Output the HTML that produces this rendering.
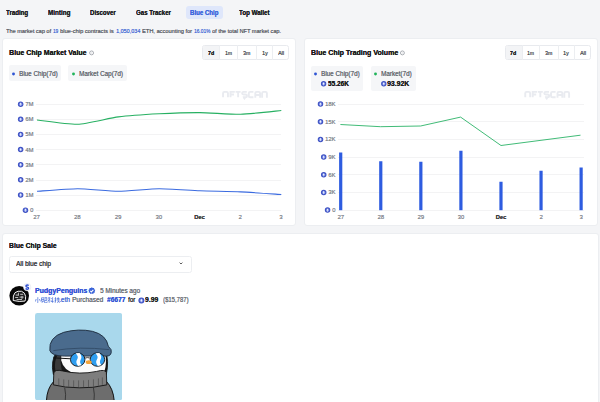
<!DOCTYPE html><html><head><meta charset="utf-8"><style>
html,body{margin:0;padding:0;}
body{width:600px;height:402px;overflow:hidden;background:#f4f5f7;position:relative;font-family:"Liberation Sans",sans-serif;}
.t{position:absolute;white-space:nowrap;line-height:1;}
.r{text-shadow:0.2px 0 0 currentColor;}
.b{text-shadow:0.12px 0 0 currentColor;}
.a{position:absolute;display:block;}
.card{position:absolute;background:#fff;border:1px solid #eceef1;border-radius:3px;box-sizing:border-box;}
.grp{position:absolute;border:1px solid #e8eaee;border-radius:2.5px;box-sizing:border-box;background:#fff;}
.leg{position:absolute;background:#f5f6f8;border-radius:2px;}
.dot{position:absolute;width:2.6px;height:2.6px;border-radius:50%;}
</style></head><body>
<div class="t b" style="left:6.20px;top:10px;font-size:6.8px;color:#1c1d1f;font-weight:700;transform:scaleX(0.9000);transform-origin:0 0;">Trading</div>
<div class="t b" style="left:48.20px;top:10px;font-size:6.8px;color:#1c1d1f;font-weight:700;transform:scaleX(0.9269);transform-origin:0 0;">Minting</div>
<div class="t b" style="left:89.90px;top:10px;font-size:6.8px;color:#1c1d1f;font-weight:700;transform:scaleX(0.8947);transform-origin:0 0;">Discover</div>
<div class="t b" style="left:135.70px;top:10px;font-size:6.8px;color:#1c1d1f;font-weight:700;transform:scaleX(0.8963);transform-origin:0 0;">Gas Tracker</div>
<div class="t b" style="left:238.50px;top:10px;font-size:6.8px;color:#1c1d1f;font-weight:700;transform:scaleX(0.9073);transform-origin:0 0;">Top Wallet</div>
<div class="a" style="left:186.3px;top:6.1px;width:36.6px;height:12.9px;border-radius:3px;background:#dfe7fb"></div>
<div class="t b" style="left:190.40px;top:10px;font-size:6.8px;color:#3f68dc;font-weight:700;transform:scaleX(0.8950);transform-origin:0 0;">Blue Chip</div>
<div class="t r" style="left:6.30px;top:28px;font-size:6.2px;color:#5d6168;font-weight:400;transform:scaleX(0.9027);transform-origin:0 0;">The market cap of</div>
<div class="t r" style="left:53.30px;top:28px;font-size:6.2px;color:#4a6fd6;font-weight:400;transform:scaleX(0.7396);transform-origin:0 0;">19</div>
<div class="t r" style="left:59.70px;top:28px;font-size:6.2px;color:#5d6168;font-weight:400;transform:scaleX(0.9221);transform-origin:0 0;">blue-chip contracts is</div>
<div class="t r" style="left:115.80px;top:28px;font-size:6.2px;color:#4a6fd6;font-weight:400;transform:scaleX(0.8811);transform-origin:0 0;">1,050,034</div>
<div class="t r" style="left:141.70px;top:28px;font-size:6.2px;color:#5d6168;font-weight:400;transform:scaleX(0.9144);transform-origin:0 0;">ETH, accounting for</div>
<div class="t r" style="left:193.70px;top:28px;font-size:6.2px;color:#4a6fd6;font-weight:400;transform:scaleX(0.7800);transform-origin:0 0;">16.01%</div>
<div class="t r" style="left:211.70px;top:28px;font-size:6.2px;color:#5d6168;font-weight:400;transform:scaleX(0.9007);transform-origin:0 0;">of the total NFT market cap.</div>
<div class="card" style="left:2px;top:38px;width:294px;height:188px"></div>
<div class="card" style="left:304px;top:38px;width:294px;height:188px"></div>
<div class="card" style="left:2px;top:232.7px;width:596.5px;height:200px"></div>
<div class="t b" style="left:9.10px;top:49px;font-size:7.0px;color:#1a1a1a;font-weight:700;">Blue Chip Market Value</div>
<div class="t b" style="left:310.60px;top:49px;font-size:7.0px;color:#1a1a1a;font-weight:700;transform:scaleX(1.0070);transform-origin:0 0;">Blue Chip Trading Volume</div>
<div class="grp" style="left:202.2px;top:45.3px;width:87.00px;height:14.3px"></div>
<div class="a" style="left:203.2px;top:46.3px;width:16.60px;height:12.3px;background:#f3f4f6;border-radius:1.5px 0 0 1.5px"></div>
<div class="a" style="left:219.30px;top:45.3px;width:1px;height:14.3px;background:#eceef1"></div>
<div class="a" style="left:236.80px;top:45.3px;width:1px;height:14.3px;background:#eceef1"></div>
<div class="a" style="left:256.20px;top:45.3px;width:1px;height:14.3px;background:#eceef1"></div>
<div class="a" style="left:272.00px;top:45.3px;width:1px;height:14.3px;background:#eceef1"></div>
<div class="t b" style="left:207.95px;top:50px;font-size:6.0px;color:#1a1a1a;font-weight:700;transform:scaleX(0.8713);transform-origin:0 0;">7d</div>
<div class="t r" style="left:225.15px;top:50px;font-size:6.0px;color:#4a4d52;font-weight:400;transform:scaleX(0.8159);transform-origin:0 0;">1m</div>
<div class="t r" style="left:243.40px;top:50px;font-size:6.0px;color:#4a4d52;font-weight:400;transform:scaleX(0.8639);transform-origin:0 0;">3m</div>
<div class="t r" style="left:261.80px;top:50px;font-size:6.0px;color:#4a4d52;font-weight:400;transform:scaleX(0.8838);transform-origin:0 0;">1y</div>
<div class="t r" style="left:277.85px;top:50px;font-size:6.0px;color:#4a4d52;font-weight:400;transform:scaleX(0.8998);transform-origin:0 0;">All</div>
<div class="grp" style="left:504.5px;top:45.3px;width:86.75px;height:14.3px"></div>
<div class="a" style="left:505.5px;top:46.3px;width:16.50px;height:12.3px;background:#f3f4f6;border-radius:1.5px 0 0 1.5px"></div>
<div class="a" style="left:521.50px;top:45.3px;width:1px;height:14.3px;background:#eceef1"></div>
<div class="a" style="left:538.75px;top:45.3px;width:1px;height:14.3px;background:#eceef1"></div>
<div class="a" style="left:557.50px;top:45.3px;width:1px;height:14.3px;background:#eceef1"></div>
<div class="a" style="left:573.75px;top:45.3px;width:1px;height:14.3px;background:#eceef1"></div>
<div class="t b" style="left:510.20px;top:50px;font-size:6.0px;color:#1a1a1a;font-weight:700;transform:scaleX(0.8713);transform-origin:0 0;">7d</div>
<div class="t r" style="left:527.23px;top:50px;font-size:6.0px;color:#4a4d52;font-weight:400;transform:scaleX(0.8159);transform-origin:0 0;">1m</div>
<div class="t r" style="left:545.02px;top:50px;font-size:6.0px;color:#4a4d52;font-weight:400;transform:scaleX(0.8639);transform-origin:0 0;">3m</div>
<div class="t r" style="left:563.33px;top:50px;font-size:6.0px;color:#4a4d52;font-weight:400;transform:scaleX(0.8838);transform-origin:0 0;">1y</div>
<div class="t r" style="left:579.75px;top:50px;font-size:6.0px;color:#4a4d52;font-weight:400;transform:scaleX(0.8998);transform-origin:0 0;">All</div>
<div class="leg" style="left:8.5px;top:65.3px;width:52.30px;height:16.20px"></div>
<div class="t r" style="left:19.20px;top:71px;font-size:6.6px;color:#676b72;font-weight:400;transform:scaleX(0.9566);transform-origin:0 0;">Blue Chip(7d)</div>
<div class="leg" style="left:68.2px;top:65.3px;width:58.80px;height:16.20px"></div>
<div class="t r" style="left:79.10px;top:71px;font-size:6.6px;color:#676b72;font-weight:400;transform:scaleX(0.9576);transform-origin:0 0;">Market Cap(7d)</div>
<div class="leg" style="left:310.5px;top:65.6px;width:52.30px;height:25.70px"></div>
<div class="t r" style="left:321.20px;top:71px;font-size:6.6px;color:#676b72;font-weight:400;transform:scaleX(0.9566);transform-origin:0 0;">Blue Chip(7d)</div>
<div class="leg" style="left:370.6px;top:65.6px;width:45.60px;height:25.70px"></div>
<div class="t r" style="left:381.20px;top:71px;font-size:6.6px;color:#676b72;font-weight:400;transform:scaleX(0.9591);transform-origin:0 0;">Market(7d)</div>
<div class="t b" style="left:328.20px;top:81px;font-size:6.6px;color:#1a1a1a;font-weight:700;transform:scaleX(0.9774);transform-origin:0 0;">55.26K</div>
<div class="t b" style="left:387.20px;top:81px;font-size:6.6px;color:#1a1a1a;font-weight:700;transform:scaleX(1.0432);transform-origin:0 0;">93.92K</div>
<div class="a" style="left:36px;top:103.85px;width:245px;height:1px;background:#f3f3f4"></div>
<div class="t r" style="left:25.24px;top:102px;font-size:5.8px;color:#868a91;font-weight:400;">7M</div>
<div class="a" style="left:36px;top:118.99px;width:245px;height:1px;background:#f3f3f4"></div>
<div class="t r" style="left:25.24px;top:117px;font-size:5.8px;color:#868a91;font-weight:400;">6M</div>
<div class="a" style="left:36px;top:134.13px;width:245px;height:1px;background:#f3f3f4"></div>
<div class="t r" style="left:25.24px;top:132px;font-size:5.8px;color:#868a91;font-weight:400;">5M</div>
<div class="a" style="left:36px;top:149.27px;width:245px;height:1px;background:#f3f3f4"></div>
<div class="t r" style="left:25.24px;top:148px;font-size:5.8px;color:#868a91;font-weight:400;">4M</div>
<div class="a" style="left:36px;top:164.41px;width:245px;height:1px;background:#f3f3f4"></div>
<div class="t r" style="left:25.24px;top:163px;font-size:5.8px;color:#868a91;font-weight:400;">3M</div>
<div class="a" style="left:36px;top:179.55px;width:245px;height:1px;background:#f3f3f4"></div>
<div class="t r" style="left:25.24px;top:178px;font-size:5.8px;color:#868a91;font-weight:400;">2M</div>
<div class="a" style="left:36px;top:194.69px;width:245px;height:1px;background:#f3f3f4"></div>
<div class="t r" style="left:25.24px;top:193px;font-size:5.8px;color:#868a91;font-weight:400;">1M</div>
<div class="a" style="left:36px;top:209.83px;width:245px;height:1px;background:#f3f3f4"></div>
<div class="t r" style="left:30.07px;top:208px;font-size:5.8px;color:#868a91;font-weight:400;">0</div>
<div class="a" style="left:337.5px;top:103.80px;width:246.0px;height:1px;background:#f3f3f4"></div>
<div class="t r" style="left:325.08px;top:102px;font-size:5.8px;color:#868a91;font-weight:400;">18K</div>
<div class="a" style="left:337.5px;top:121.47px;width:246.0px;height:1px;background:#f3f3f4"></div>
<div class="t r" style="left:325.08px;top:120px;font-size:5.8px;color:#868a91;font-weight:400;">15K</div>
<div class="a" style="left:337.5px;top:139.14px;width:246.0px;height:1px;background:#f3f3f4"></div>
<div class="t r" style="left:325.08px;top:137px;font-size:5.8px;color:#868a91;font-weight:400;">12K</div>
<div class="a" style="left:337.5px;top:156.81px;width:246.0px;height:1px;background:#f3f3f4"></div>
<div class="t r" style="left:328.31px;top:155px;font-size:5.8px;color:#868a91;font-weight:400;">9K</div>
<div class="a" style="left:337.5px;top:174.48px;width:246.0px;height:1px;background:#f3f3f4"></div>
<div class="t r" style="left:328.31px;top:173px;font-size:5.8px;color:#868a91;font-weight:400;">6K</div>
<div class="a" style="left:337.5px;top:192.15px;width:246.0px;height:1px;background:#f3f3f4"></div>
<div class="t r" style="left:328.31px;top:190px;font-size:5.8px;color:#868a91;font-weight:400;">3K</div>
<div class="a" style="left:337.5px;top:209.82px;width:246.0px;height:1px;background:#f3f3f4"></div>
<div class="t r" style="left:332.17px;top:208px;font-size:5.8px;color:#868a91;font-weight:400;">0</div>
<div class="t r" style="left:33.37px;top:215px;font-size:5.8px;color:#868a91;font-weight:400;">27</div>
<div class="t r" style="left:337.47px;top:215px;font-size:5.8px;color:#868a91;font-weight:400;">27</div>
<div class="t r" style="left:74.09px;top:215px;font-size:5.8px;color:#868a91;font-weight:400;">28</div>
<div class="t r" style="left:377.54px;top:215px;font-size:5.8px;color:#868a91;font-weight:400;">28</div>
<div class="t r" style="left:114.81px;top:215px;font-size:5.8px;color:#868a91;font-weight:400;">29</div>
<div class="t r" style="left:417.61px;top:215px;font-size:5.8px;color:#868a91;font-weight:400;">29</div>
<div class="t r" style="left:155.53px;top:215px;font-size:5.8px;color:#868a91;font-weight:400;">30</div>
<div class="t r" style="left:457.68px;top:215px;font-size:5.8px;color:#868a91;font-weight:400;">30</div>
<div class="t b" style="left:194.16px;top:215px;font-size:5.8px;color:#3c3d40;font-weight:700;">Dec</div>
<div class="t b" style="left:495.66px;top:215px;font-size:5.8px;color:#3c3d40;font-weight:700;">Dec</div>
<div class="t r" style="left:238.59px;top:215px;font-size:5.8px;color:#868a91;font-weight:400;">2</div>
<div class="t r" style="left:539.44px;top:215px;font-size:5.8px;color:#868a91;font-weight:400;">2</div>
<div class="t r" style="left:279.31px;top:215px;font-size:5.8px;color:#868a91;font-weight:400;">3</div>
<div class="t r" style="left:579.51px;top:215px;font-size:5.8px;color:#868a91;font-weight:400;">3</div>
<svg class="a" style="left:0;top:0" width="600" height="402" viewBox="0 0 600 402">
<rect x="339.10" y="152.5" width="3.2" height="57.70" fill="#2e5ce0"/>
<rect x="379.17" y="161.25" width="3.2" height="48.95" fill="#2e5ce0"/>
<rect x="419.24" y="161.75" width="3.2" height="48.45" fill="#2e5ce0"/>
<rect x="459.31" y="150.75" width="3.2" height="59.45" fill="#2e5ce0"/>
<rect x="499.38" y="181.75" width="3.2" height="28.45" fill="#2e5ce0"/>
<rect x="539.45" y="170.75" width="3.2" height="39.45" fill="#2e5ce0"/>
<rect x="579.52" y="167.5" width="3.2" height="42.70" fill="#2e5ce0"/>
<path d="M37,120 C41.07,120.43 69.56,124.61 77.7,124.3 C85.84,123.99 110.26,117.95 118.4,116.9 C126.54,115.85 150.95,114.23 159.1,113.8 C167.25,113.37 191.75,112.55 199.9,112.6 C208.05,112.65 232.46,114.51 240.6,114.3 C248.74,114.09 277.23,110.88 281.3,110.5" fill="none" stroke="#27b062" stroke-width="1.1"/>
<path d="M37,191.3 C41.07,191.04 69.56,188.70 77.7,188.7 C85.84,188.70 110.26,191.30 118.4,191.3 C126.54,191.30 150.95,188.75 159.1,188.7 C167.25,188.65 191.75,190.48 199.9,190.8 C208.05,191.12 232.46,191.53 240.6,191.9 C248.74,192.27 277.23,194.24 281.3,194.5" fill="none" stroke="#3b6be0" stroke-width="1.1"/>
<polyline points="340.4,124.5 380.5,126.7 420.6,126 460.6,117.1 501,145.5 541,140.3 580.5,135.2" fill="none" stroke="#2bb368" stroke-width="0.9" stroke-linejoin="round"/>
<g transform="translate(222.2,91)" fill="none" stroke="#e9ebf0" stroke-width="1.9"><path d="M0.85 6.3 V2.2 Q0.85 0.85 2.2 0.85 H4.4 Q5.75 0.85 5.75 2.2 V6.3"/><path d="M8.3 6.3 V0.85 H12.6 M8.3 3.5 H11.8"/><path d="M13.4 0.85 H18.4 M15.9 0.85 V6.3"/><path d="M24.6 0.85 H21.4 Q19.9 0.85 19.9 2.3 Q19.9 3.5 21.4 3.5 H23.3 Q24.8 3.5 24.8 5.0 Q24.8 6.3 23.3 6.3 H21.6 Q21.9 7.6 23 8.3"/><path d="M31.2 0.85 H28.0 Q26.6 0.85 26.6 2.3 V4.9 Q26.6 6.3 28.0 6.3 H31.2"/><path d="M33.1 6.8 V2.3 Q33.1 0.85 34.5 0.85 H36.5 Q37.9 0.85 37.9 2.3 V6.8 M33.1 4.0 H37.9"/><path d="M39.9 6.8 V2.3 Q39.9 0.85 41.3 0.85 H43.3 Q44.7 0.85 44.7 2.3 V6.8"/></g>
<g transform="translate(524.4,91)" fill="none" stroke="#e9ebf0" stroke-width="1.9"><path d="M0.85 6.3 V2.2 Q0.85 0.85 2.2 0.85 H4.4 Q5.75 0.85 5.75 2.2 V6.3"/><path d="M8.3 6.3 V0.85 H12.6 M8.3 3.5 H11.8"/><path d="M13.4 0.85 H18.4 M15.9 0.85 V6.3"/><path d="M24.6 0.85 H21.4 Q19.9 0.85 19.9 2.3 Q19.9 3.5 21.4 3.5 H23.3 Q24.8 3.5 24.8 5.0 Q24.8 6.3 23.3 6.3 H21.6 Q21.9 7.6 23 8.3"/><path d="M31.2 0.85 H28.0 Q26.6 0.85 26.6 2.3 V4.9 Q26.6 6.3 28.0 6.3 H31.2"/><path d="M33.1 6.8 V2.3 Q33.1 0.85 34.5 0.85 H36.5 Q37.9 0.85 37.9 2.3 V6.8 M33.1 4.0 H37.9"/><path d="M39.9 6.8 V2.3 Q39.9 0.85 41.3 0.85 H43.3 Q44.7 0.85 44.7 2.3 V6.8"/></g>
</svg>
<div class="t b" style="left:9.10px;top:243px;font-size:6.9px;color:#1a1a1a;font-weight:700;transform:scaleX(0.9854);transform-origin:0 0;">Blue Chip Sale</div>
<div class="a" style="left:8.5px;top:255.5px;width:183px;height:17px;border:0.8px solid #eceef1;border-radius:2.5px;box-sizing:border-box"></div>
<div class="t r" style="left:16.10px;top:261px;font-size:6.6px;color:#38393d;font-weight:400;transform:scaleX(0.9835);transform-origin:0 0;">All blue chip</div>
<svg class="a" style="left:178.8px;top:262.4px" width="4" height="3" viewBox="0 0 4 3"><path d="M0.6 0.6 L2 2.0 L3.4 0.6" fill="none" stroke="#333" stroke-width="0.8"/></svg>
<div class="t b" style="left:35.20px;top:288px;font-size:6.9px;color:#3556d6;font-weight:700;transform:scaleX(1.0051);transform-origin:0 0;">PudgyPenguins</div>
<div class="t r" style="left:100.20px;top:288px;font-size:6.8px;color:#6b7077;font-weight:400;transform:scaleX(0.9365);transform-origin:0 0;">5 Minutes ago</div>
<svg class="a" style="left:35px;top:297px" width="25" height="6" viewBox="0 0 25 6" fill="none" stroke="#5277dc" stroke-width="0.75"><path d="M2.8 0.2 V5.6 Q2.8 5.9 2.2 5.6 M1.2 2 L0.3 4.6 M4.4 2 L5.4 4.4"/><path d="M6.5 0.8 H9 V4.2 H6.5 Z M6.5 2.5 H9 M7.6 4.2 L7 5.8 M9.5 0.4 H11.8 V3.5 H9.7 M9.6 3.5 V5.8 H12 V4.7 M10 1.9 H11.4"/><path d="M13 1 H15.5 M14.2 0.2 V5.8 M14.2 2.5 L12.8 4.5 M14.2 2.5 L15.4 3.7 M16.2 1.2 L16.8 2 M16.2 2.8 L16.8 3.6 M15.8 4.5 H18.5 M17.6 0.2 V5.8"/><path d="M19.5 1.8 H21.5 M20.5 0.2 V5.3 L19.6 5.8 M19.4 4 L21.5 3 M22 1.5 H24.5 M23.2 0.2 V2.6 M22.2 2.7 H24.3 L22.4 5.8 M22.6 3.5 L24.6 5.8"/></svg>
<div class="t r" style="left:59.40px;top:297px;font-size:6.4px;color:#4a6fd6;font-weight:400;transform:scaleX(1.0212);transform-origin:0 0;">.eth</div>
<div class="t r" style="left:72.20px;top:297px;font-size:6.9px;color:#6b7077;font-weight:400;transform:scaleX(0.9459);transform-origin:0 0;">Purchased</div>
<div class="t b" style="left:107.20px;top:297px;font-size:6.8px;color:#3556d6;font-weight:700;transform:scaleX(0.9732);transform-origin:0 0;">#6677</div>
<div class="t r" style="left:128.00px;top:297px;font-size:6.6px;color:#26282b;font-weight:400;transform:scaleX(0.9349);transform-origin:0 0;">for</div>
<div class="t b" style="left:144.70px;top:297px;font-size:6.9px;color:#1f1f1f;font-weight:700;transform:scaleX(0.9830);transform-origin:0 0;">9.99</div>
<div class="t r" style="left:162.70px;top:297px;font-size:6.8px;color:#6b7077;font-weight:400;transform:scaleX(0.8761);transform-origin:0 0;">($15,787)</div>
<svg class="a" style="left:35px;top:312.7px" width="87.2" height="87.2" viewBox="0 0 88 88"><defs><clipPath id="cp"><rect x="0" y="0" width="88" height="88" rx="2.5"/></clipPath></defs><g clip-path="url(#cp)"><rect width="88" height="88" fill="#a9d8ec"/><path d="M11.5 89 Q12 76 19 69 L72 69 Q79 76 80 89 Z" fill="#6d6d6d" stroke="#111" stroke-width="1"/><path d="M18.5 62 Q15.5 48 22 39 L71 38 Q75 48 72 62 Z" fill="#161616" stroke="#111" stroke-width="0.8"/><path d="M20.5 58 Q19 49 23 42 L26 42 Q25 50 27 58 Z" fill="#3a3a3a"/><path d="M26.5 41 L70.5 39.5 Q73 50 70 59 Q56 63 42 61.5 Q29 59 26.5 48 Z" fill="#fbfbfb"/><path d="M19 60.5 Q20 56.5 28 58.5 Q45 62.5 62 59 Q71 56.5 72 60 L72.5 72.5 Q58 76 45 75.5 Q30 75.5 18.5 72.5 Z" fill="#7e7e7e" stroke="#111" stroke-width="0.9"/><path d="M24 66 V73 M29 67 V74 M34 67.5 V74.5 M39 68 V75 M44 68 V75 M49 68 V75 M54 67.5 V75 M59 67 V74.5 M64 66 V73.5 M68 65 V72.5" stroke="#444" stroke-width="0.6"/><path d="M30 75.5 Q31.5 82 30.5 89 M59 75.5 Q60.5 82 59.5 89" stroke="#222" stroke-width="0.7" fill="none"/><path d="M15 38 Q13.5 24.5 29 19.5 Q44 15.5 58 18.5 Q72 22 74 33.5 L76.8 37 Q78 43.5 72 43.5 L30 43.5 Q17 43.5 15 38Z" fill="#4a6b8d" stroke="#1c2b3b" stroke-width="0.9"/><path d="M18.5 38 Q45 33.5 75 37" fill="none" stroke="#2f4762" stroke-width="0.8"/><path d="M18.5 45.3 L35.8 46.2" stroke="#111" stroke-width="1"/><ellipse cx="43.1" cy="47" rx="7.3" ry="6.8" fill="#2f9ef0" stroke="#111" stroke-width="0.9"/><ellipse cx="63" cy="47" rx="7.3" ry="6.8" fill="#2f9ef0" stroke="#111" stroke-width="0.9"/><path d="M41 40.6 Q44.5 44 42.5 47 Q40.5 50 43.5 53.4 L47 52.6 Q44.5 50 46.2 47 Q48 44 45 40.4Z M61 40.6 Q64.5 44 62.5 47 Q60.5 50 63.5 53.4 L67 52.6 Q64.5 50 66.2 47 Q68 44 65 40.4Z" fill="#fff"/><path d="M50.4 45.5 Q53 44.5 55.7 45.5" stroke="#111" stroke-width="0.8" fill="none"/><ellipse cx="54.2" cy="49.6" rx="3" ry="1.9" fill="#f2a33a"/></g></svg>
<svg class="a" style="left:0;top:0" width="600" height="402" viewBox="0 0 600 402"><circle cx="91.6" cy="52.9" r="1.95" fill="#fff" stroke="#a2a6ad" stroke-width="0.95"/><circle cx="91.6" cy="52.9" r="0.7" fill="#dfe1e5"/><circle cx="402.4" cy="52.9" r="1.95" fill="#fff" stroke="#a2a6ad" stroke-width="0.95"/><circle cx="402.4" cy="52.9" r="0.7" fill="#dfe1e5"/><circle cx="13.5" cy="74" r="1.45" fill="#2f55d4"/><circle cx="73.5" cy="74" r="1.45" fill="#20b45a"/><circle cx="315.5" cy="74" r="1.45" fill="#2f55d4"/><circle cx="375.5" cy="74" r="1.45" fill="#20b45a"/><g transform="translate(320.90,81.10) scale(0.5400)"><circle cx="5" cy="5" r="5" fill="#3e51c2"/><circle cx="5" cy="5" r="3.2" fill="#6c80e0"/><path d="M5 2.0 L6.8 5.1 L5 6.1 L3.2 5.1 Z M5 6.6 L6.8 5.6 L5 8.1 L3.2 5.6 Z" fill="#f0f3ff"/></g>
<g transform="translate(381.10,81.10) scale(0.5400)"><circle cx="5" cy="5" r="5" fill="#3e51c2"/><circle cx="5" cy="5" r="3.2" fill="#6c80e0"/><path d="M5 2.0 L6.8 5.1 L5 6.1 L3.2 5.1 Z M5 6.6 L6.8 5.6 L5 8.1 L3.2 5.6 Z" fill="#f0f3ff"/></g>
<g transform="translate(17.89,101.40) scale(0.5500)"><circle cx="5" cy="5" r="5" fill="#3e51c2"/><circle cx="5" cy="5" r="3.2" fill="#6c80e0"/><path d="M5 2.0 L6.8 5.1 L5 6.1 L3.2 5.1 Z M5 6.6 L6.8 5.6 L5 8.1 L3.2 5.6 Z" fill="#f0f3ff"/></g>
<g transform="translate(17.89,116.54) scale(0.5500)"><circle cx="5" cy="5" r="5" fill="#3e51c2"/><circle cx="5" cy="5" r="3.2" fill="#6c80e0"/><path d="M5 2.0 L6.8 5.1 L5 6.1 L3.2 5.1 Z M5 6.6 L6.8 5.6 L5 8.1 L3.2 5.6 Z" fill="#f0f3ff"/></g>
<g transform="translate(17.89,131.68) scale(0.5500)"><circle cx="5" cy="5" r="5" fill="#3e51c2"/><circle cx="5" cy="5" r="3.2" fill="#6c80e0"/><path d="M5 2.0 L6.8 5.1 L5 6.1 L3.2 5.1 Z M5 6.6 L6.8 5.6 L5 8.1 L3.2 5.6 Z" fill="#f0f3ff"/></g>
<g transform="translate(17.89,146.82) scale(0.5500)"><circle cx="5" cy="5" r="5" fill="#3e51c2"/><circle cx="5" cy="5" r="3.2" fill="#6c80e0"/><path d="M5 2.0 L6.8 5.1 L5 6.1 L3.2 5.1 Z M5 6.6 L6.8 5.6 L5 8.1 L3.2 5.6 Z" fill="#f0f3ff"/></g>
<g transform="translate(17.89,161.96) scale(0.5500)"><circle cx="5" cy="5" r="5" fill="#3e51c2"/><circle cx="5" cy="5" r="3.2" fill="#6c80e0"/><path d="M5 2.0 L6.8 5.1 L5 6.1 L3.2 5.1 Z M5 6.6 L6.8 5.6 L5 8.1 L3.2 5.6 Z" fill="#f0f3ff"/></g>
<g transform="translate(17.89,177.10) scale(0.5500)"><circle cx="5" cy="5" r="5" fill="#3e51c2"/><circle cx="5" cy="5" r="3.2" fill="#6c80e0"/><path d="M5 2.0 L6.8 5.1 L5 6.1 L3.2 5.1 Z M5 6.6 L6.8 5.6 L5 8.1 L3.2 5.6 Z" fill="#f0f3ff"/></g>
<g transform="translate(17.89,192.24) scale(0.5500)"><circle cx="5" cy="5" r="5" fill="#3e51c2"/><circle cx="5" cy="5" r="3.2" fill="#6c80e0"/><path d="M5 2.0 L6.8 5.1 L5 6.1 L3.2 5.1 Z M5 6.6 L6.8 5.6 L5 8.1 L3.2 5.6 Z" fill="#f0f3ff"/></g>
<g transform="translate(22.72,207.38) scale(0.5500)"><circle cx="5" cy="5" r="5" fill="#3e51c2"/><circle cx="5" cy="5" r="3.2" fill="#6c80e0"/><path d="M5 2.0 L6.8 5.1 L5 6.1 L3.2 5.1 Z M5 6.6 L6.8 5.6 L5 8.1 L3.2 5.6 Z" fill="#f0f3ff"/></g>
<g transform="translate(317.73,101.35) scale(0.5500)"><circle cx="5" cy="5" r="5" fill="#3e51c2"/><circle cx="5" cy="5" r="3.2" fill="#6c80e0"/><path d="M5 2.0 L6.8 5.1 L5 6.1 L3.2 5.1 Z M5 6.6 L6.8 5.6 L5 8.1 L3.2 5.6 Z" fill="#f0f3ff"/></g>
<g transform="translate(317.73,119.02) scale(0.5500)"><circle cx="5" cy="5" r="5" fill="#3e51c2"/><circle cx="5" cy="5" r="3.2" fill="#6c80e0"/><path d="M5 2.0 L6.8 5.1 L5 6.1 L3.2 5.1 Z M5 6.6 L6.8 5.6 L5 8.1 L3.2 5.6 Z" fill="#f0f3ff"/></g>
<g transform="translate(317.73,136.69) scale(0.5500)"><circle cx="5" cy="5" r="5" fill="#3e51c2"/><circle cx="5" cy="5" r="3.2" fill="#6c80e0"/><path d="M5 2.0 L6.8 5.1 L5 6.1 L3.2 5.1 Z M5 6.6 L6.8 5.6 L5 8.1 L3.2 5.6 Z" fill="#f0f3ff"/></g>
<g transform="translate(320.96,154.36) scale(0.5500)"><circle cx="5" cy="5" r="5" fill="#3e51c2"/><circle cx="5" cy="5" r="3.2" fill="#6c80e0"/><path d="M5 2.0 L6.8 5.1 L5 6.1 L3.2 5.1 Z M5 6.6 L6.8 5.6 L5 8.1 L3.2 5.6 Z" fill="#f0f3ff"/></g>
<g transform="translate(320.96,172.03) scale(0.5500)"><circle cx="5" cy="5" r="5" fill="#3e51c2"/><circle cx="5" cy="5" r="3.2" fill="#6c80e0"/><path d="M5 2.0 L6.8 5.1 L5 6.1 L3.2 5.1 Z M5 6.6 L6.8 5.6 L5 8.1 L3.2 5.6 Z" fill="#f0f3ff"/></g>
<g transform="translate(320.96,189.70) scale(0.5500)"><circle cx="5" cy="5" r="5" fill="#3e51c2"/><circle cx="5" cy="5" r="3.2" fill="#6c80e0"/><path d="M5 2.0 L6.8 5.1 L5 6.1 L3.2 5.1 Z M5 6.6 L6.8 5.6 L5 8.1 L3.2 5.6 Z" fill="#f0f3ff"/></g>
<g transform="translate(324.82,207.37) scale(0.5500)"><circle cx="5" cy="5" r="5" fill="#3e51c2"/><circle cx="5" cy="5" r="3.2" fill="#6c80e0"/><path d="M5 2.0 L6.8 5.1 L5 6.1 L3.2 5.1 Z M5 6.6 L6.8 5.6 L5 8.1 L3.2 5.6 Z" fill="#f0f3ff"/></g>
<g transform="translate(9.4,285.9)"><circle cx="9.8" cy="9.8" r="9.8" fill="#070707"/><path d="M3.8 14.6 Q3.3 9.5 5.6 6.8 Q8.5 4.6 12.2 5.4 Q15.8 6.6 16.2 10.5 Q16.4 14.2 15.5 15.2 Q10 16.2 3.8 14.6Z" fill="#1c1c1c" stroke="#f2f2f2" stroke-width="1.0"/><path d="M6.3 9.2 H9.4 M10.8 8.4 H13.8 M5.8 11.6 H8.8 M10.2 11.2 H14.2 M7.2 13.6 H12.6 M9 6.8 V9.6 M12.6 10 V13" stroke="#dcdcdc" stroke-width="0.85"/></g><g transform="translate(27.2,287.1)"><circle cx="0" cy="0" r="3.7" fill="#fff" stroke="#dfe3ee" stroke-width="0.6"/><path d="M1.4 -1.4 Q1 -2.1 0 -2.1 Q-1.3 -2.1 -1.3 -1.1 Q-1.3 -0.2 0 0 Q1.4 0.2 1.4 1.1 Q1.4 2.1 0 2.1 Q-1.1 2.1 -1.5 1.3" fill="none" stroke="#2f4fd0" stroke-width="1.35"/></g><g transform="translate(91.8,290.8) scale(0.74) translate(-5,-5)"><path d="M5 0.2 L6.3 1.3 L8 1.2 L8.3 2.9 L9.7 4 L8.9 5.5 L9.3 7.2 L7.7 7.7 L6.8 9.2 L5 8.6 L3.2 9.2 L2.3 7.7 L0.7 7.2 L1.1 5.5 L0.3 4 L1.7 2.9 L2 1.2 L3.7 1.3 Z" fill="#3a63d8"/><path d="M3 5.1 L4.4 6.5 L7.1 3.7" fill="none" stroke="#fff" stroke-width="1.4"/></g><g transform="translate(138.40,297.50) scale(0.6000)"><circle cx="5" cy="5" r="5" fill="#3e51c2"/><circle cx="5" cy="5" r="3.2" fill="#6c80e0"/><path d="M5 2.0 L6.8 5.1 L5 6.1 L3.2 5.1 Z M5 6.6 L6.8 5.6 L5 8.1 L3.2 5.6 Z" fill="#f0f3ff"/></g>
</svg>
</body></html>
